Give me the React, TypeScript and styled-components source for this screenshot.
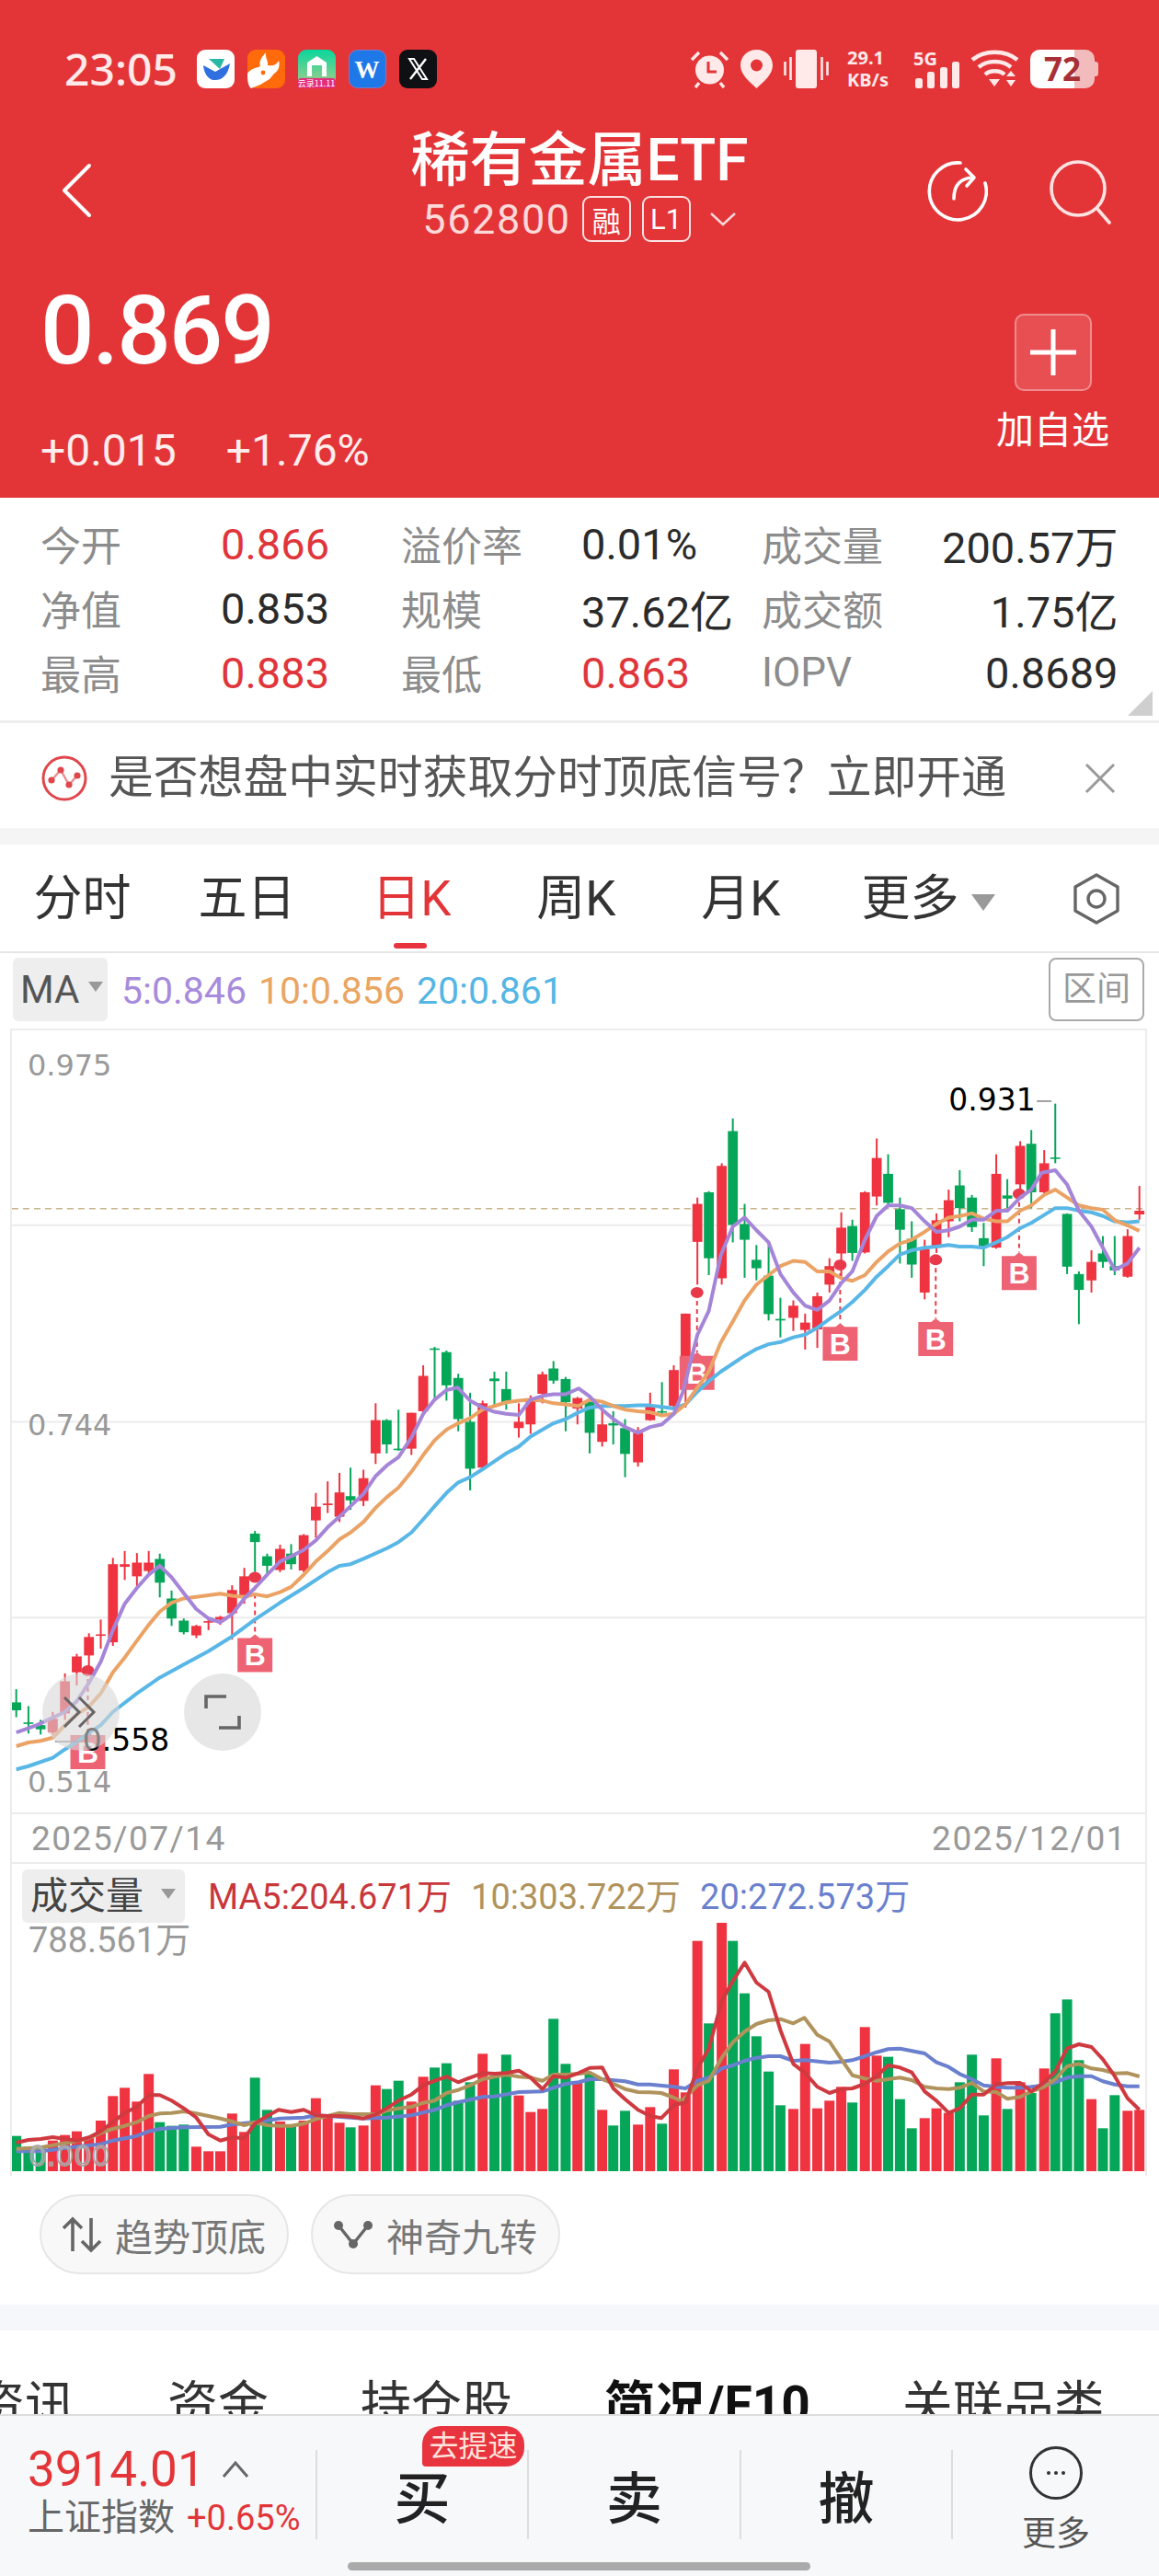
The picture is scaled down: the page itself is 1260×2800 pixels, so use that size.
import React, { FC } from 'react';
import styled, { createGlobalStyle } from 'styled-components';

/* ---------- DATA (coordinates read off the chart) ---------- */

type Candle = [number, 'r' | 'g', number, number, number, number];

const RED = '#ef3340';
const GREEN = '#06a659';

const cx = (z: number, right: boolean) => z / 2.489 + (right ? 630 : 0);
const cy = (z: number) => 1100 + z / 1.742;
const vy = (z: number) => 2120 + z / 3;

const leftCandles: Candle[] = [
    [44, 'g', 1282, 1307, 1322, 1335], [77, 'g', 1314, 1345, 1347, 1366], [110, 'g', 1340, 1350, 1358, 1368],
    [143, 'r', 1325, 1338, 1364, 1368], [176, 'r', 1252, 1267, 1328, 1340], [208, 'r', 1215, 1220, 1250, 1275],
    [241, 'r', 1176, 1183, 1218, 1240], [273, 'r', 1150, 1178, 1180, 1205], [306, 'r', 1033, 1045, 1193, 1200],
    [338, 'r', 1020, 1045, 1050, 1075], [371, 'r', 1024, 1042, 1068, 1088], [403, 'r', 1020, 1042, 1058, 1062],
    [433, 'g', 1025, 1035, 1080, 1108], [465, 'g', 1095, 1110, 1148, 1162], [498, 'g', 1148, 1152, 1174, 1178],
    [532, 'r', 1160, 1162, 1180, 1185], [565, 'r', 1145, 1153, 1155, 1170], [597, 'r', 1143, 1145, 1150, 1160],
    [629, 'r', 1085, 1094, 1138, 1188], [662, 'r', 1052, 1068, 1105, 1120], [691, 'g', 982, 987, 1003, 1060],
    [724, 'g', 1025, 1030, 1048, 1065], [759, 'r', 1008, 1016, 1056, 1060], [789, 'g', 1007, 1025, 1045, 1055],
    [823, 'r', 988, 990, 1057, 1060], [856, 'r', 910, 936, 962, 995], [888, 'r', 888, 930, 933, 948],
    [920, 'r', 872, 909, 955, 965], [950, 'g', 862, 916, 924, 942], [985, 'r', 866, 882, 925, 935],
    [1018, 'r', 740, 772, 835, 855], [1048, 'g', 770, 772, 818, 835], [1080, 'g', 752, 826, 828, 830],
    [1115, 'r', 758, 758, 826, 838], [1147, 'r', 668, 688, 755, 760], [1178, 'g', 633, 636, 638, 735],
    [1210, 'g', 640, 643, 706, 735], [1242, 'g', 684, 692, 770, 793], [1274, 'g', 720, 775, 864, 905],
    [1308, 'r', 735, 740, 862, 865], [1340, 'g', 680, 693, 698, 745], [1372, 'g', 680, 713, 738, 752],
    [1406, 'r', 740, 775, 787, 805], [1438, 'r', 725, 735, 780, 798], [1470, 'r', 680, 685, 722, 740],
    [1500, 'g', 660, 674, 697, 703], [1533, 'g', 690, 694, 738, 793], [1565, 'r', 728, 730, 750, 780],
];

const rightCandles: Candle[] = [
    [30, 'g', 737, 737, 796, 835], [64, 'r', 752, 780, 813, 822], [94, 'g', 755, 778, 782, 818],
    [126, 'g', 770, 787, 836, 880], [161, 'r', 785, 796, 852, 860], [194, 'r', 720, 745, 772, 773],
    [226, 'g', 700, 755, 757, 760], [258, 'r', 668, 677, 745, 748], [290, 'r', 570, 570, 660, 748],
    [322, 'r', 350, 362, 434, 515], [353, 'g', 338, 340, 465, 497], [388, 'r', 285, 290, 503, 515],
    [418, 'g', 200, 224, 402, 435], [450, 'g', 362, 400, 430, 502], [482, 'g', 440, 468, 484, 507],
    [515, 'g', 440, 498, 571, 583], [547, 'g', 540, 580, 583, 615], [582, 'r', 545, 555, 578, 603],
    [614, 'r', 570, 587, 601, 638], [647, 'r', 530, 537, 600, 635], [680, 'r', 465, 480, 515, 530],
    [712, 'r', 378, 407, 456, 500], [742, 'g', 392, 404, 455, 470], [776, 'r', 338, 340, 454, 456],
    [808, 'r', 238, 275, 348, 365], [839, 'g', 268, 305, 360, 365], [871, 'g', 350, 372, 411, 475],
    [903, 'g', 395, 428, 477, 502], [938, 'r', 430, 448, 530, 543], [970, 'r', 380, 393, 445, 455],
    [1003, 'r', 335, 355, 395, 425], [1033, 'g', 298, 327, 370, 395], [1066, 'g', 345, 350, 406, 415],
    [1098, 'g', 398, 427, 443, 480], [1132, 'r', 268, 305, 445, 447], [1162, 'g', 315, 346, 352, 370],
    [1197, 'r', 243, 252, 325, 340], [1227, 'g', 222, 248, 340, 370], [1262, 'r', 260, 285, 340, 345],
    [1292, 'g', 172, 274, 276, 285], [1324, 'g', 380, 381, 481, 495], [1356, 'g', 490, 495, 525, 590],
    [1390, 'r', 450, 472, 507, 530], [1421, 'g', 423, 456, 472, 483], [1453, 'g', 423, 480, 488, 497],
    [1488, 'r', 410, 423, 500, 502], [1520, 'r', 328, 375, 382, 392],
];

const leftVolumes = [
    605, 640, 645, 620, 602, 590, 610, 555, 475, 448, 493, 403, 560, 572, 568, 640, 655, 655, 532, 592, 415, 520, 558, 570,
    555, 482, 545, 562, 577, 571, 440, 452, 425, 493, 412, 382, 368, 490, 430, 337, 410, 340, 473, 527, 517, 223, 370, 430,
];
const rightVolumes = [
    400, 520, 571, 523, 568, 511, 565, 388, 463, -31, 238, -90, -31, 140, 280, 395, 505, 517, 305, 515, 490, 445, 496, 250,
    343, 347, 485, 580, 547, 515, 530, 430, 340, 538, 352, 517, 430, 465, 385, 205, 160, 358, 485, 580, 472, 523, 520,
];

type Line = { left: number[][]; right: number[][] };

const ma5: Line = {
    left: [[44,1364],[100,1350],[176,1325],[208,1305],[241,1270],[273,1230],[306,1170],[338,1120],[371,1090],[403,1065],[433,1048],[465,1070],[498,1100],[532,1130],[565,1148],[597,1155],[629,1140],[662,1110],[691,1090],[724,1065],[759,1040],[789,1030],[823,1018],[856,1000],[888,975],[920,955],[950,935],[985,912],[1018,878],[1048,858],[1080,842],[1115,805],[1147,760],[1178,733],[1210,715],[1240,710],[1274,735],[1308,748],[1340,756],[1372,760],[1406,762],[1438,733],[1470,726],[1500,723],[1533,723],[1568,712]],
    right: [[30,727],[64,752],[94,770],[126,785],[161,796],[194,785],[226,780],[258,760],[282,720],[322,610],[353,565],[385,460],[418,405],[450,388],[482,412],[515,435],[547,495],[582,530],[614,555],[647,563],[680,545],[712,512],[742,490],[776,430],[808,385],[839,365],[871,365],[903,370],[938,395],[970,415],[1003,412],[1033,405],[1066,392],[1098,392],[1132,375],[1162,375],[1197,350],[1227,335],[1255,303],[1292,298],[1324,325],[1356,375],[1390,405],[1421,445],[1453,487],[1488,475],[1520,445]],
};
const ma10: Line = {
    left: [[44,1390],[77,1383],[110,1380],[143,1374],[176,1350],[208,1330],[241,1315],[273,1290],[306,1250],[338,1222],[371,1190],[403,1160],[433,1135],[465,1118],[498,1110],[532,1107],[597,1101],[629,1105],[662,1107],[691,1102],[724,1106],[759,1098],[789,1088],[823,1065],[856,1040],[888,1020],[920,998],[950,985],[985,965],[1018,938],[1048,918],[1080,900],[1115,870],[1147,838],[1178,810],[1210,790],[1242,778],[1274,768],[1308,752],[1340,745],[1372,738],[1406,735],[1438,733],[1470,735],[1500,740],[1533,742],[1568,745]],
    right: [[30,733],[64,737],[94,745],[126,752],[161,755],[194,757],[226,763],[258,760],[290,742],[322,710],[353,680],[385,625],[418,585],[450,545],[482,515],[515,497],[547,480],[582,470],[614,472],[647,490],[680,490],[712,503],[742,508],[776,497],[808,472],[839,452],[871,437],[903,430],[938,415],[970,400],[1003,388],[1033,385],[1066,380],[1098,390],[1132,395],[1162,395],[1197,375],[1227,365],[1262,345],[1292,335],[1324,350],[1356,365],[1390,370],[1421,373],[1453,393],[1488,403],[1520,413]],
};
const ma20: Line = {
    left: [[44,1434],[77,1428],[143,1412],[176,1396],[208,1382],[241,1365],[273,1350],[306,1325],[371,1290],[433,1260],[498,1235],[565,1210],[629,1182],[691,1150],[759,1118],[823,1090],[888,1060],[920,1048],[950,1045],[985,1035],[1048,1015],[1080,1003],[1115,985],[1147,960],[1178,935],[1210,910],[1242,890],[1274,880],[1308,865],[1340,850],[1372,835],[1406,822],[1438,803],[1470,790],[1500,778],[1533,770],[1568,757]],
    right: [[30,748],[64,745],[126,745],[161,744],[194,744],[226,747],[258,750],[290,742],[322,718],[353,698],[385,680],[418,665],[450,650],[482,637],[515,628],[547,624],[582,615],[614,610],[647,597],[680,580],[712,565],[742,548],[776,525],[808,500],[839,480],[871,458],[903,450],[938,445],[970,443],[1003,440],[1033,443],[1066,443],[1098,445],[1132,435],[1162,425],[1197,408],[1227,398],[1262,383],[1292,370],[1324,370],[1356,375],[1390,378],[1421,385],[1453,395],[1488,397],[1520,395]],
};

const volMa5: Line = {
    left: [[44,627],[77,618],[110,615],[143,609],[176,615],[208,620],[241,610],[273,590],[306,560],[338,530],[371,510],[403,472],[433,472],[465,490],[498,515],[532,545],[565,600],[597,620],[629,610],[662,612],[691,565],[724,540],[755,520],[789,527],[823,520],[856,538],[888,540],[920,540],[950,542],[985,548],[1018,535],[1048,515],[1080,490],[1115,470],[1147,440],[1178,425],[1210,412],[1242,430],[1274,415],[1308,400],[1340,402],[1372,400],[1406,392],[1438,415],[1470,452],[1500,410],[1533,415],[1568,400]],
    right: [[30,383],[64,382],[94,450],[126,485],[161,520],[194,540],[224,547],[258,505],[290,495],[322,385],[353,320],[388,165],[418,100],[450,40],[482,105],[515,135],[547,260],[582,370],[614,400],[647,445],[680,465],[712,452],[742,450],[776,435],[808,410],[839,375],[871,382],[903,398],[938,460],[970,490],[1003,530],[1033,515],[1066,470],[1098,470],[1132,437],[1162,433],[1197,432],[1227,460],[1262,430],[1292,395],[1324,320],[1356,306],[1390,315],[1421,355],[1453,410],[1488,482],[1520,520]],
};
const volMa10: Line = {
    left: [[44,647],[110,643],[143,635],[208,622],[241,612],[273,595],[306,582],[338,572],[371,560],[403,540],[433,532],[465,530],[498,525],[532,532],[565,540],[597,548],[629,558],[662,570],[691,560],[724,570],[759,572],[789,572],[823,565],[856,550],[888,540],[920,530],[950,534],[985,534],[1018,535],[1048,522],[1080,515],[1115,510],[1147,497],[1178,490],[1210,465],[1242,455],[1274,440],[1308,420],[1340,412],[1372,405],[1406,412],[1438,415],[1470,425],[1500,405],[1533,405],[1568,402]],
    right: [[30,398],[64,420],[94,435],[126,452],[161,462],[194,463],[224,465],[258,480],[280,492],[322,440],[353,425],[388,350],[418,300],[450,265],[482,240],[515,228],[547,224],[582,238],[612,220],[647,275],[680,297],[712,355],[742,407],[776,418],[808,425],[839,420],[871,415],[903,423],[938,445],[970,450],[1003,452],[1033,448],[1066,432],[1098,460],[1132,462],[1162,484],[1197,478],[1227,460],[1262,445],[1292,420],[1324,378],[1356,370],[1390,385],[1421,390],[1453,401],[1488,400],[1520,411]],
};
const volMa20: Line = {
    left: [[44,655],[110,655],[143,650],[208,640],[273,632],[306,620],[371,605],[403,590],[433,582],[498,577],[597,575],[629,568],[691,560],[724,555],[759,548],[823,545],[856,538],[888,540],[985,548],[1048,545],[1115,538],[1178,520],[1210,505],[1242,495],[1308,478],[1340,476],[1406,462],[1470,460],[1533,435],[1568,430]],
    right: [[30,420],[64,420],[126,427],[161,437],[194,437],[258,445],[290,450],[322,425],[353,415],[388,385],[418,375],[450,360],[482,350],[515,345],[547,345],[582,360],[614,358],[680,366],[712,363],[742,358],[776,345],[808,332],[839,322],[871,320],[903,328],[938,336],[970,365],[1003,380],[1033,403],[1066,420],[1098,440],[1132,445],[1162,448],[1197,448],[1227,445],[1262,440],[1292,430],[1324,415],[1356,410],[1390,410],[1421,427],[1453,437],[1488,443],[1520,443]],
};

const linePath = (line: Line, toY: (z: number) => number) => {
    const pts = [
        ...line.left.map(([x, y]) => [cx(x, false), toY(y)]),
        ...line.right.map(([x, y]) => [cx(x, true), toY(y)]),
    ];
    return pts.map(([x, y], i) => `${i === 0 ? 'M' : 'L'}${x.toFixed(1)} ${y.toFixed(1)}`).join(' ');
};

const allCandles = [
    ...leftCandles.map((c) => ({ c, right: false })),
    ...rightCandles.map((c) => ({ c, right: true })),
];

const signals = [
    { x: cx(238, false), oval: cy(1247), top: cy(1362) },
    { x: cx(691, false), oval: cy(1070), top: cy(1178) },
    { x: cx(321, true), oval: cy(530), top: cy(643) },
    { x: cx(709, true), oval: cy(478), top: cy(588) },
    { x: cx(968, true), oval: cy(468), top: cy(579) },
    { x: cx(1194, true), oval: cy(343), top: cy(454) },
];

const stats = [
    ['今开', '0.866', 'up', '溢价率', '0.01%', '', '成交量', '200.57万', ''],
    ['净值', '0.853', '', '规模', '37.62亿', '', '成交额', '1.75亿', ''],
    ['最高', '0.883', 'up', '最低', '0.863', 'up', 'IOPV', '0.8689', ''],
];

const periods = ['分时', '五日', '日K', '周K', '月K'];
const details = ['资讯', '资金', '持仓股', '简况/F10', '关联品类'];

/* ---------- STYLES ---------- */

const GlobalStyle = createGlobalStyle`
    html, body {
        margin: 0;
        padding: 0;
        background: #fff;
    }
    * {
        box-sizing: border-box;
    }
`;

const SPage = styled.div`
    width: 1260px;
    height: 2800px;
    overflow: hidden;
    background: #fff;
    display: flex;
    flex-direction: column;
    font-family: Roboto, 'Noto Sans CJK SC', sans-serif;
`;

const SHeader = styled.header`
    height: 541px;
    flex: none;
    background: #e33538;
    color: #fff;
    padding-top: 54px;
`;

const SStatusBar = styled.div`
    height: 42px;
    display: flex;
    align-items: center;
    justify-content: space-between;
    padding: 0 70px 0 70px;
`;

const SStatusLeft = styled.div`
    display: flex;
    align-items: center;
    gap: 14px;
`;

const STime = styled.span`
    font-family: 'Noto Sans', sans-serif;
    font-size: 48px;
    font-weight: 500;
    line-height: 42px;
    color: #ffe9e9;
    width: 130px;
`;

const SAppIcon = styled.svg`
    width: 41px;
    height: 42px;
    display: block;
`;

const SStatusRight = styled.div`
    display: flex;
    align-items: center;
    gap: 12px;
`;

const SSpeed = styled.div`
    width: 52px;
    margin: 0 8px;
    font-family: 'Noto Sans', sans-serif;
    font-size: 20px;
    font-weight: 700;
    line-height: 24px;
    color: #ffe9e9;
    white-space: nowrap;
`;

const SSignal = styled.div`
    position: relative;
    width: 50px;
    height: 42px;
`;

const SSignalLabel = styled.span`
    position: absolute;
    left: 0;
    top: 0;
    font-family: 'Noto Sans', sans-serif;
    font-size: 20px;
    font-weight: 700;
    line-height: 20px;
    color: #ffe9e9;
`;

const SBattery = styled.div`
    position: relative;
    width: 70px;
    height: 42px;
    border-radius: 10px;
    background: linear-gradient(to right, #fff 68%, #f3bcbc 68%);
    color: #a82f35;
    font-family: 'Noto Sans', sans-serif;
    font-size: 35px;
    font-weight: 700;
    line-height: 42px;
    text-align: center;
    &::after {
        content: '';
        position: absolute;
        right: -4px;
        top: 13px;
        width: 4px;
        height: 16px;
        border-radius: 0 3px 3px 0;
        background: #f3bcbc;
    }
`;

const SNav = styled.div`
    margin-top: 44px;
    height: 125px;
    display: grid;
    grid-template-columns: 1fr auto 1fr;
    align-items: center;
    padding: 0 52px;
`;

const SNavBack = styled.div`
    margin: 12px 0 0 14px;
`;

const STitleBlock = styled.div`
    display: flex;
    flex-direction: column;
    align-items: center;
`;

const STitle = styled.div`
    font-size: 64px;
    font-weight: 500;
    line-height: 70px;
    white-space: nowrap;
`;

const SCodeRow = styled.div`
    display: flex;
    align-items: center;
    gap: 12px;
    height: 56px;
    color: #fbd9d9;
`;

const SCode = styled.span`
    font-size: 45px;
    letter-spacing: 1.6px;
`;

const STag = styled.span`
    width: 53px;
    height: 50px;
    border: 2px solid #fbe3e3;
    border-radius: 9px;
    display: flex;
    align-items: center;
    justify-content: center;
    font-size: 31px;
    color: #fff;
`;

const SCodeCaret = styled.svg`
    width: 30px;
    height: 16px;
    margin-left: 8px;
`;

const SNavIcons = styled.div`
    display: flex;
    justify-content: flex-end;
    gap: 66px;
    margin-top: 12px;
`;

const SPriceRow = styled.div`
    margin-top: 42px;
    display: flex;
    justify-content: space-between;
    padding: 0 54px 0 44px;
`;

const SPrice = styled.div`
    padding-top: 3px;
    font-size: 103px;
    font-weight: 500;
    line-height: 100px;
    letter-spacing: -2px;
`;

const SChange = styled.div`
    margin-top: 55px;
    display: flex;
    gap: 54px;
    font-size: 48px;
    line-height: 50px;
    color: #ffecec;
`;

const SAddCol = styled.div`
    width: 123px;
    padding-top: 34px;
    display: flex;
    flex-direction: column;
    align-items: center;
`;

const SAddButton = styled.div`
    width: 84px;
    height: 84px;
    border-radius: 10px;
    background: #e84f52;
    border: 2px solid #f08d8e;
    display: flex;
    align-items: center;
    justify-content: center;
`;

const SAddLabel = styled.div`
    margin-top: 18px;
    font-size: 41px;
    line-height: 50px;
    white-space: nowrap;
`;

const SStats = styled.section`
    position: relative;
    height: 245px;
    flex: none;
    padding: 15px 45px 0 44px;
    border-bottom: 3px solid #eeeeee;
    display: grid;
    grid-template-columns: 196px 196px 196px 196px 196px 1fr;
    grid-auto-rows: 70px;
    align-items: center;
    font-size: 47px;
`;

const SStatLabel = styled.span`
    font-size: 44px;
    color: #8c8c8c;
    white-space: nowrap;
`;

const SStatValue = styled.span<{ $up?: boolean; $end?: boolean }>`
    color: ${(p) => (p.$up ? '#e0353a' : '#2b2b2b')};
    text-align: ${(p) => (p.$end ? 'right' : 'left')};
    white-space: nowrap;
`;

const SCorner = styled.div`
    position: absolute;
    right: 7px;
    bottom: 5px;
    width: 27px;
    height: 27px;
    background: #cfcfcf;
    clip-path: polygon(100% 0, 100% 100%, 0 100%);
`;

const SBanner = styled.div`
    height: 114px;
    flex: none;
    display: flex;
    align-items: center;
    padding: 5px 47px 0 45px;
`;

const SBannerText = styled.span`
    flex: 1;
    margin-left: 23px;
    font-size: 48.8px;
    line-height: 60px;
    color: #555;
    white-space: nowrap;
`;

const SStrip = styled.div<{ $height: number; $color: string }>`
    height: ${(p) => p.$height}px;
    flex: none;
    background: ${(p) => p.$color};
`;

const SPeriodTabs = styled.nav`
    height: 118px;
    flex: none;
    display: flex;
    align-items: center;
    border-bottom: 2px solid #e6e6e6;
    padding: 2px 42px 0 0;
`;

const SPeriodTab = styled.div<{ $active?: boolean; $shift?: number }>`
    position: relative;
    width: 179px;
    margin-left: ${(p) => p.$shift || 0}px;
    font-size: 53px;
    line-height: 60px;
    text-align: center;
    color: ${(p) => (p.$active ? '#e33538' : '#333')};
    ${(p) =>
        p.$active &&
        `
        &::after {
            content: '';
            position: absolute;
            left: 70px;
            bottom: -24px;
            width: 36px;
            height: 6px;
            border-radius: 3px;
            background: #e8343f;
        }
    `}
`;

const SMoreCaret = styled.i`
    position: absolute;
    left: 156px;
    top: 25px;
    width: 26px;
    height: 18px;
    background: #999;
    clip-path: polygon(0 0, 100% 0, 50% 100%);
`;

const SSettings = styled.svg`
    margin-left: auto;
    width: 52px;
    height: 56px;
`;

const SMaRow = styled.div`
    height: 82px;
    flex: none;
    display: flex;
    align-items: flex-start;
    padding: 5px 16px 0 14px;
`;

const SMaSelect = styled.div`
    position: relative;
    width: 103px;
    height: 69px;
    border-radius: 6px;
    background: #eeeeee;
    color: #555;
    font-size: 42px;
    line-height: 69px;
    padding-left: 8px;
`;

const SSmallCaret = styled.i<{ $right: number; $top: number }>`
    position: absolute;
    right: ${(p) => p.$right}px;
    top: ${(p) => p.$top}px;
    width: 16px;
    height: 11px;
    background: #999;
    clip-path: polygon(0 0, 100% 0, 50% 100%);
`;

const SMaValues = styled.div`
    flex: 1;
    display: flex;
    gap: 13px;
    margin-left: 15px;
    font-size: 41px;
    line-height: 69px;
    padding-top: 2px;
`;

const SMaValue = styled.span<{ $color: string }>`
    color: ${(p) => p.$color};
    white-space: nowrap;
`;

const SRangeButton = styled.div`
    width: 104px;
    height: 69px;
    border: 2px solid #aaa;
    border-radius: 8px;
    color: #999;
    font-size: 37px;
    line-height: 65px;
    text-align: center;
`;

const SChartBox = styled.div`
    margin: 0 13px 0 11px;
    border-left: 2px solid #ececec;
    border-right: 2px solid #ececec;
    flex: none;
`;

const SPricePanel = styled.div`
    position: relative;
    height: 852px;
    border-top: 2px solid #ececec;
`;

const SChartSvg = styled.svg`
    display: block;
    width: 100%;
    height: 100%;
`;

const SAxisText = styled.text`
    font-family: 'DejaVu Sans', sans-serif;
    font-size: 32px;
    fill: #999;
`;

const SMarkText = styled.text`
    font-family: 'DejaVu Sans', sans-serif;
    font-size: 33px;
    fill: #000;
`;

const SBadgeText = styled.text`
    font-family: 'Liberation Sans', sans-serif;
    font-size: 32px;
    font-weight: 700;
    fill: #fff;
    text-anchor: middle;
`;

const SZeroText = styled.text`
    font-family: 'DejaVu Sans', sans-serif;
    font-size: 31px;
    fill: rgba(255, 255, 255, 0.35);
    stroke: #a3a3a3;
    stroke-width: 1.6px;
`;

const SFloatButton = styled.div<{ $left: number }>`
    position: absolute;
    left: ${(p) => p.$left}px;
    top: 699px;
    width: 84px;
    height: 84px;
    border-radius: 50%;
    background: rgba(215, 215, 215, 0.6);
    display: flex;
    align-items: center;
    justify-content: center;
`;

const SDates = styled.div`
    height: 56px;
    border-top: 2px solid #ececec;
    border-bottom: 2px solid #ececec;
    display: flex;
    justify-content: space-between;
    align-items: center;
    padding: 0 20px 0 21px;
    font-size: 37px;
    letter-spacing: 1.5px;
    color: #999;
`;

const SVolumePanel = styled.div`
    position: relative;
`;

const SVolumeHeader = styled.div`
    height: 64px;
    display: flex;
    align-items: flex-end;
    gap: 25px;
    padding-left: 11px;
`;

const SVolumeSelect = styled.div`
    position: relative;
    width: 177px;
    height: 58px;
    border-radius: 6px;
    background: #eeeeee;
    color: #444;
    font-size: 41px;
    line-height: 58px;
    padding-left: 9px;
    white-space: nowrap;
`;

const SVolumeValues = styled.div`
    display: flex;
    gap: 21px;
    height: 58px;
    font-size: 38px;
    line-height: 60px;
`;

const SVolumeMax = styled.div`
    position: absolute;
    left: 18px;
    top: 64px;
    font-size: 38px;
    line-height: 38px;
    color: #999;
    z-index: 1;
`;

const SVolumeSvg = styled.svg`
    display: block;
    width: 100%;
    height: 275px;
`;

const SChips = styled.div`
    height: 87px;
    flex: none;
    margin: 20px 0 33px;
    padding-left: 43px;
    display: flex;
    gap: 24px;
`;

const SChip = styled.div`
    width: 271px;
    height: 87px;
    border: 2px solid #e6e6e6;
    border-radius: 44px;
    background: #f8f8f8;
    display: flex;
    align-items: center;
    gap: 14px;
    padding-left: 22px;
    color: #777;
    font-size: 41px;
    white-space: nowrap;
`;

const SDetailTabs = styled.nav`
    height: 91px;
    flex: none;
    overflow: hidden;
    display: flex;
    gap: 100px;
    margin-left: -28px;
    padding-top: 51px;
    font-size: 55px;
    line-height: 60px;
    color: #333;
    white-space: nowrap;
`;

const SDetailTab = styled.span<{ $active?: boolean }>`
    font-weight: ${(p) => (p.$active ? 700 : 400)};
    color: ${(p) => (p.$active ? '#111' : '#333')};
`;

const SBottomBar = styled.footer`
    flex: 1;
    background: #f7f8fa;
    border-top: 2px solid #dddddd;
    display: flex;
    flex-direction: column;
    padding-top: 37px;
`;

const SActions = styled.div`
    height: 97px;
    display: flex;
`;

const SIndex = styled.div`
    width: 343px;
    padding-left: 30px;
    margin-top: -4px;
`;

const SIndexTop = styled.div`
    display: flex;
    align-items: center;
    gap: 18px;
    font-size: 53px;
    line-height: 50px;
    color: #e33538;
`;

const SIndexBottom = styled.div`
    margin-top: 3px;
    display: flex;
    align-items: baseline;
    gap: 13px;
    font-size: 40px;
    line-height: 50px;
    color: #666;
    white-space: nowrap;
`;

const SIndexChange = styled.span`
    font-size: 38px;
    color: #e33538;
`;

const SAction = styled.div<{ $width: number }>`
    position: relative;
    width: ${(p) => p.$width}px;
    border-left: 2px solid #dddddd;
    display: flex;
    flex-direction: column;
    align-items: center;
    justify-content: center;
    font-size: 61px;
    font-weight: 500;
    color: #222;
`;

const SBadge = styled.span`
    position: absolute;
    left: 114px;
    top: -26px;
    width: 111px;
    height: 44px;
    border-radius: 20px 20px 20px 4px;
    background: #e8343f;
    color: #ffe3dc;
    font-size: 32px;
    font-weight: 400;
    line-height: 44px;
    text-align: center;
`;

const SMoreCircle = styled.div`
    width: 58px;
    height: 58px;
    border: 3px solid #333;
    border-radius: 50%;
    display: flex;
    align-items: center;
    justify-content: center;
    gap: 4px;
`;

const SDot = styled.i`
    width: 4px;
    height: 4px;
    border-radius: 50%;
    background: #333;
`;

const SMoreLabel = styled.span`
    margin-top: 20px;
    font-size: 37px;
    font-weight: 400;
    line-height: 36px;
    color: #555;
`;

const SMoreBody = styled.div`
    display: flex;
    flex-direction: column;
    align-items: center;
    margin-top: 8px;
`;

const SHomeBar = styled.div`
    width: 503px;
    height: 9px;
    margin: 25px 0 0 378px;
    border-radius: 5px;
    background: #aaaaaa;
`;

/* ---------- ICONS ---------- */

const AppIcons: FC = () => (
    <>
        <SAppIcon viewBox="0 0 41 42">
            <rect width="41" height="42" rx="9" fill="#fff" />
            <path d="M13 10 L30 10 L25 21 Z" fill="#2bb7a6" />
            <path d="M7 17 L20 24 L36 15 C34 28 27 34 18 33 C12 32 8 26 7 17 Z" fill="#2f6fe0" />
        </SAppIcon>
        <SAppIcon viewBox="0 0 41 42">
            <rect width="41" height="42" rx="9" fill="#ff6a0a" />
            <path d="M0 26 C4 20 10 20 14 18 C12 12 16 8 20 3 C19 9 23 12 22 17 C27 18 31 17 34 12 C36 18 33 24 29 26 L24 32 L14 38 L4 42 C1 40 0 34 0 26 Z" fill="#fff" />
            <circle cx="17" cy="25" r="2.4" fill="#ff6a0a" />
        </SAppIcon>
        <SAppIcon viewBox="0 0 41 42">
            <defs>
                <linearGradient id="homeBg" x1="0" y1="0" x2="0" y2="1">
                    <stop offset="0" stopColor="#08d79c" />
                    <stop offset="0.7" stopColor="#7fcf8f" />
                    <stop offset="1" stopColor="#e52e7a" />
                </linearGradient>
            </defs>
            <rect width="41" height="42" rx="9" fill="url(#homeBg)" />
            <path d="M10 29 V14 L20.5 7 L31 14 V29 H26 V17 H15 V29 Z" fill="#fff" />
            <rect y="31" width="41" height="11" rx="4" fill="#e42d7c" />
            <text x="20" y="40" fontSize="9" fill="#fff" textAnchor="middle" fontFamily="'Noto Sans CJK SC', sans-serif">
                云录11.11
            </text>
        </SAppIcon>
        <SAppIcon viewBox="0 0 41 42">
            <rect x="0.5" y="0.5" width="40" height="41" rx="9" fill="#1f78e8" stroke="#7a7ac8" />
            <text x="20" y="31" fontSize="27" fontWeight="700" fill="#fff" textAnchor="middle" fontFamily="'Liberation Serif', serif">
                W
            </text>
        </SAppIcon>
        <SAppIcon viewBox="0 0 41 42">
            <rect width="41" height="42" rx="9" fill="#0e1013" />
            <path d="M11 10 H16 L30 32 H25 Z" fill="none" stroke="#fff" strokeWidth="2" />
            <path d="M29 10 L12 32" stroke="#fff" strokeWidth="2.4" />
        </SAppIcon>
    </>
);

const StatusIcons: FC = () => (
    <SStatusRight>
        <svg width="43" height="42" viewBox="0 0 43 42">
            <circle cx="21.5" cy="22" r="15.5" fill="#ffe9e9" />
            <path d="M20 13 V24 H29" fill="none" stroke="#e33538" strokeWidth="3" />
            <path d="M2 11 L10 3 M33 3 L41 11 M6 41 L10 36 M37 41 L33 36" stroke="#ffe9e9" strokeWidth="3.4" />
        </svg>
        <svg width="35" height="42" viewBox="0 0 35 42">
            <path d="M17.5 0 C27 0 35 7 35 17 C35 27 25 35 17.5 42 C10 35 0 27 0 17 C0 7 8 0 17.5 0 Z" fill="#ffe9e9" />
            <circle cx="17.5" cy="17" r="6.5" fill="#e33538" />
        </svg>
        <svg width="49" height="42" viewBox="0 0 49 42">
            <rect x="13" y="0" width="23" height="42" rx="3" fill="#ffe9e9" />
            <path d="M1.5 13 V28 M7.5 8 V33 M41.5 8 V33 M47.5 13 V28" stroke="#ffe9e9" strokeWidth="2.6" />
        </svg>
        <SSpeed>
            29.1
            <br />
            KB/s
        </SSpeed>
        <SSignal>
            <SSignalLabel>5G</SSignalLabel>
            <svg width="50" height="42" viewBox="0 0 50 42">
                <rect x="2" y="31" width="8" height="11" rx="2.5" fill="#ffe9e9" />
                <rect x="15" y="24" width="8" height="18" rx="2.5" fill="#ffe9e9" />
                <rect x="29" y="19" width="8" height="23" rx="2.5" fill="#ffe9e9" />
                <rect x="42" y="13" width="8" height="29" rx="2.5" fill="#ffe9e9" />
            </svg>
        </SSignal>
        <svg width="53" height="42" viewBox="0 0 53 42">
            <g fill="none" stroke="#ffe9e9" strokeWidth="4.4">
                <path d="M2 11 C15 0 38 0 51 11" />
                <path d="M9 19 C18 11 35 11 44 19" />
                <path d="M16 27 C21 22 32 22 37 27" />
            </g>
            <path d="M20 32 H32 L26 40 Z M39 29 L44 23 L49 29 Z M39 33 H49 L44 40 Z" fill="#ffe9e9" />
        </svg>
        <SBattery>72</SBattery>
    </SStatusRight>
);

const BackIcon: FC = () => (
    <svg width="36" height="60" viewBox="0 0 36 60" fill="none" stroke="#fff" strokeWidth="4" strokeLinecap="round" strokeLinejoin="round">
        <path d="M31 3 L4 30 L31 57" />
    </svg>
);

const ShareIcon: FC = () => (
    <svg width="68" height="68" viewBox="0 0 68 68" fill="none" stroke="#fff" strokeWidth="3.6" strokeLinecap="round" strokeLinejoin="round">
        <path d="M38 3 A31 31 0 1 0 65 25" />
        <path d="M31 42 C31 29 37 20 51 19" />
        <path d="M44 10 L53 19 L45 28" />
    </svg>
);

const SearchIcon: FC = () => (
    <svg width="68" height="70" viewBox="0 0 68 70" fill="none" stroke="#fde2e2" strokeWidth="3.6" strokeLinecap="round">
        <circle cx="32" cy="31" r="29" />
        <path d="M53 53 L66 68" />
    </svg>
);

const BannerIcon: FC = () => (
    <svg width="50" height="50" viewBox="0 0 50 50">
        <circle cx="25" cy="25" r="23" fill="none" stroke="#e0474c" strokeWidth="3" />
        <path d="M11 27 L21 16 L30 32 L39 22" fill="none" stroke="#eb8d90" strokeWidth="2.4" />
        <circle cx="11" cy="27" r="3.6" fill="#e0474c" />
        <circle cx="21" cy="16" r="3.6" fill="#e0474c" />
        <circle cx="30" cy="32" r="3.6" fill="#e0474c" />
        <circle cx="39" cy="22" r="3.6" fill="#e0474c" />
    </svg>
);

const CloseIcon: FC = () => (
    <svg width="34" height="34" viewBox="0 0 34 34" stroke="#999" strokeWidth="3">
        <path d="M2 2 L32 32 M32 2 L2 32" />
    </svg>
);

const TrendIcon: FC = () => (
    <svg width="44" height="40" viewBox="0 0 44 40" fill="none" stroke="#666" strokeWidth="3.6">
        <path d="M12 38 V3 M2 13 L12 3 L22 13" />
        <path d="M32 2 V37 M22 27 L32 37 L42 27" />
    </svg>
);

const NineIcon: FC = () => (
    <svg width="44" height="34" viewBox="0 0 44 34" fill="none" stroke="#666" strokeWidth="3.4">
        <path d="M6 7 L22 27 L38 7" />
        <circle cx="6" cy="7" r="5" fill="#666" stroke="none" />
        <circle cx="22" cy="27" r="5" fill="#666" stroke="none" />
        <circle cx="38" cy="7" r="5" fill="#666" stroke="none" />
    </svg>
);

/* ---------- CHARTS ---------- */

const PriceChart: FC = () => (
    <SChartSvg viewBox="13 1119 1234 851" preserveAspectRatio="none">
        <g stroke="#ececec" strokeWidth="2">
            <path d="M13 1331 H1247 M13 1545 H1247 M13 1758 H1247" />
        </g>
        <path d="M13 1313 H1247" stroke="#c9b48a" strokeWidth="1.6" strokeDasharray="7 5" />
        <SAxisText x="30" y="1168">0.975</SAxisText>
        <SAxisText x="30" y="1560">0.744</SAxisText>
        <SAxisText x="30" y="1948">0.514</SAxisText>
        {allCandles.map(({ c: [x, color, wickTop, bodyTop, bodyBottom, wickBottom], right }) => {
            const px = cx(x, right);
            const fill = color === 'r' ? RED : GREEN;
            const h = Math.max(cy(bodyBottom) - cy(bodyTop), 1.6);
            return (
                <g key={`${right ? 'r' : 'l'}${x}`}>
                    <rect x={px - 1} y={cy(wickTop)} width="2" height={cy(wickBottom) - cy(wickTop)} fill={fill} />
                    <rect x={px - 5.4} y={cy(bodyTop)} width="10.8" height={h} fill={fill} />
                </g>
            );
        })}
        {signals.map((s) => (
            <g key={s.x}>
                <path d={`M${s.x} ${s.oval} V${s.top}`} stroke="#e8394a" strokeWidth="2" strokeDasharray="5 4" />
                <ellipse cx={s.x} cy={s.oval} rx="7" ry="6" fill="#e8394a" />
                <path
                    d={`M${s.x - 19} ${s.top + 4} H${s.x - 5} L${s.x} ${s.top} L${s.x + 5} ${s.top + 4} H${s.x + 19} V${s.top + 41} H${s.x - 19} Z`}
                    fill="#ee6373"
                />
                <SBadgeText x={s.x} y={s.top + 34}>B</SBadgeText>
            </g>
        ))}
        <path d={linePath(ma20, cy)} fill="none" stroke="#58b7e6" strokeWidth="4" strokeLinejoin="round" />
        <path d={linePath(ma10, cy)} fill="none" stroke="#eba365" strokeWidth="4" strokeLinejoin="round" />
        <path d={linePath(ma5, cy)} fill="none" stroke="#a585d8" strokeWidth="4" strokeLinejoin="round" />
        <SMarkText x="1033" y="1206">0.931</SMarkText>
        <path d="M1129 1196 H1145" stroke="#888" strokeWidth="1.6" />
        <path d="M60 1893 H88" stroke="#888" strokeWidth="1.6" />
        <SMarkText x="90" y="1903">0.558</SMarkText>
    </SChartSvg>
);

const VolumeChart: FC = () => (
    <SVolumeSvg viewBox="13 2090 1234 275" preserveAspectRatio="none">
        {allCandles.map(({ c: [x, color], right }, i) => {
            const volume = right ? rightVolumes[i - leftCandles.length] : leftVolumes[i];
            return (
                <rect
                    key={`${right ? 'r' : 'l'}${x}`}
                    x={cx(x, right) - 5.5}
                    y={vy(volume)}
                    width="11"
                    height={2360 - vy(volume)}
                    fill={color === 'r' ? RED : GREEN}
                />
            );
        })}
        <path d={linePath(volMa20, vy)} fill="none" stroke="#6a80cf" strokeWidth="4" strokeLinejoin="round" />
        <path d={linePath(volMa10, vy)} fill="none" stroke="#b0935c" strokeWidth="4" strokeLinejoin="round" />
        <path d={linePath(volMa5, vy)} fill="none" stroke="#cf3a40" strokeWidth="4" strokeLinejoin="round" />
        <SZeroText x="31" y="2354">0.000</SZeroText>
    </SVolumeSvg>
);

/* ---------- COMPONENT ---------- */

const App: FC = () => (
    <>
        <GlobalStyle />
        <SPage>
            <SHeader>
                <SStatusBar>
                    <SStatusLeft>
                        <STime>23:05</STime>
                        <AppIcons />
                    </SStatusLeft>
                    <StatusIcons />
                </SStatusBar>
                <SNav>
                    <SNavBack>
                        <BackIcon />
                    </SNavBack>
                    <STitleBlock>
                        <STitle>稀有金属ETF</STitle>
                        <SCodeRow>
                            <SCode>562800</SCode>
                            <STag>融</STag>
                            <STag>L1</STag>
                            <SCodeCaret viewBox="0 0 30 16" fill="none" stroke="#fbd9d9" strokeWidth="2.4">
                                <path d="M2 2 L15 14 L28 2" />
                            </SCodeCaret>
                        </SCodeRow>
                    </STitleBlock>
                    <SNavIcons>
                        <ShareIcon />
                        <SearchIcon />
                    </SNavIcons>
                </SNav>
                <SPriceRow>
                    <div>
                        <SPrice>0.869</SPrice>
                        <SChange>
                            <span>+0.015</span>
                            <span>+1.76%</span>
                        </SChange>
                    </div>
                    <SAddCol>
                        <SAddButton>
                            <svg width="50" height="50" viewBox="0 0 50 50" stroke="#fff" strokeWidth="5">
                                <path d="M25 0 V50 M0 25 H50" />
                            </svg>
                        </SAddButton>
                        <SAddLabel>加自选</SAddLabel>
                    </SAddCol>
                </SPriceRow>
            </SHeader>

            <SStats>
                {stats.map((row) => (
                    <React.Fragment key={row[0]}>
                        <SStatLabel>{row[0]}</SStatLabel>
                        <SStatValue $up={row[2] === 'up'}>{row[1]}</SStatValue>
                        <SStatLabel>{row[3]}</SStatLabel>
                        <SStatValue $up={row[5] === 'up'}>{row[4]}</SStatValue>
                        <SStatLabel>{row[6]}</SStatLabel>
                        <SStatValue $end>{row[7]}</SStatValue>
                    </React.Fragment>
                ))}
                <SCorner />
            </SStats>

            <SBanner>
                <BannerIcon />
                <SBannerText>是否想盘中实时获取分时顶底信号？立即开通</SBannerText>
                <CloseIcon />
            </SBanner>
            <SStrip $height={18} $color="#f5f5f5" />

            <SPeriodTabs>
                {periods.map((p) => (
                    <SPeriodTab key={p} $active={p === '日K'}>
                        {p}
                    </SPeriodTab>
                ))}
                <SPeriodTab $shift={5}>
                    更多
                    <SMoreCaret />
                </SPeriodTab>
                <SSettings viewBox="0 0 52 56" fill="none" stroke="#666" strokeWidth="3.4">
                    <path d="M26 2 L49 15 V41 L26 54 L3 41 V15 Z" strokeLinejoin="round" />
                    <circle cx="26" cy="28" r="9" />
                </SSettings>
            </SPeriodTabs>

            <SMaRow>
                <SMaSelect>
                    MA
                    <SSmallCaret $right={5} $top={26} />
                </SMaSelect>
                <SMaValues>
                    <SMaValue $color="#a78bdc">5:0.846</SMaValue>
                    <SMaValue $color="#eaa562">10:0.856</SMaValue>
                    <SMaValue $color="#54b6e4">20:0.861</SMaValue>
                </SMaValues>
                <SRangeButton>区间</SRangeButton>
            </SMaRow>

            <SChartBox>
                <SPricePanel>
                    <PriceChart />
                    <SFloatButton $left={33}>
                        <svg width="40" height="40" viewBox="0 0 40 40" fill="none" stroke="#666" strokeWidth="3">
                            <path d="M2 4 L18 20 L2 36 M18 4 L34 20 L18 36" />
                        </svg>
                    </SFloatButton>
                    <SFloatButton $left={187}>
                        <svg width="40" height="40" viewBox="0 0 40 40" fill="none" stroke="#666" strokeWidth="3.6">
                            <path d="M2 16 V3 H24 M38 24 V37 H16" />
                        </svg>
                    </SFloatButton>
                </SPricePanel>
                <SDates>
                    <span>2025/07/14</span>
                    <span>2025/12/01</span>
                </SDates>
                <SVolumePanel>
                    <SVolumeHeader>
                        <SVolumeSelect>
                            成交量
                            <SSmallCaret $right={10} $top={21} />
                        </SVolumeSelect>
                        <SVolumeValues>
                            <SMaValue $color="#c8373b">MA5:204.671万</SMaValue>
                            <SMaValue $color="#b0935c">10:303.722万</SMaValue>
                            <SMaValue $color="#6a80cf">20:272.573万</SMaValue>
                        </SVolumeValues>
                    </SVolumeHeader>
                    <SVolumeMax>788.561万</SVolumeMax>
                    <VolumeChart />
                </SVolumePanel>
            </SChartBox>

            <SChips>
                <SChip>
                    <TrendIcon />
                    趋势顶底
                </SChip>
                <SChip>
                    <NineIcon />
                    神奇九转
                </SChip>
            </SChips>
            <SStrip $height={28} $color="#f5f7fa" />

            <SDetailTabs>
                {details.map((d) => (
                    <SDetailTab key={d} $active={d === '简况/F10'}>
                        {d}
                    </SDetailTab>
                ))}
            </SDetailTabs>

            <SBottomBar>
                <SActions>
                    <SIndex>
                        <SIndexTop>
                            3914.01
                            <svg width="30" height="20" viewBox="0 0 30 20" fill="none" stroke="#666" strokeWidth="3">
                                <path d="M2 18 L15 3 L28 18" />
                            </svg>
                        </SIndexTop>
                        <SIndexBottom>
                            上证指数
                            <SIndexChange>+0.65%</SIndexChange>
                        </SIndexBottom>
                    </SIndex>
                    <SAction $width={230}>
                        买
                        <SBadge>去提速</SBadge>
                    </SAction>
                    <SAction $width={231}>卖</SAction>
                    <SAction $width={230}>撤</SAction>
                    <SAction $width={226}>
                        <SMoreBody>
                            <SMoreCircle>
                                <SDot />
                                <SDot />
                                <SDot />
                            </SMoreCircle>
                            <SMoreLabel>更多</SMoreLabel>
                        </SMoreBody>
                    </SAction>
                </SActions>
                <SHomeBar />
            </SBottomBar>
        </SPage>
    </>
);

export default App;
